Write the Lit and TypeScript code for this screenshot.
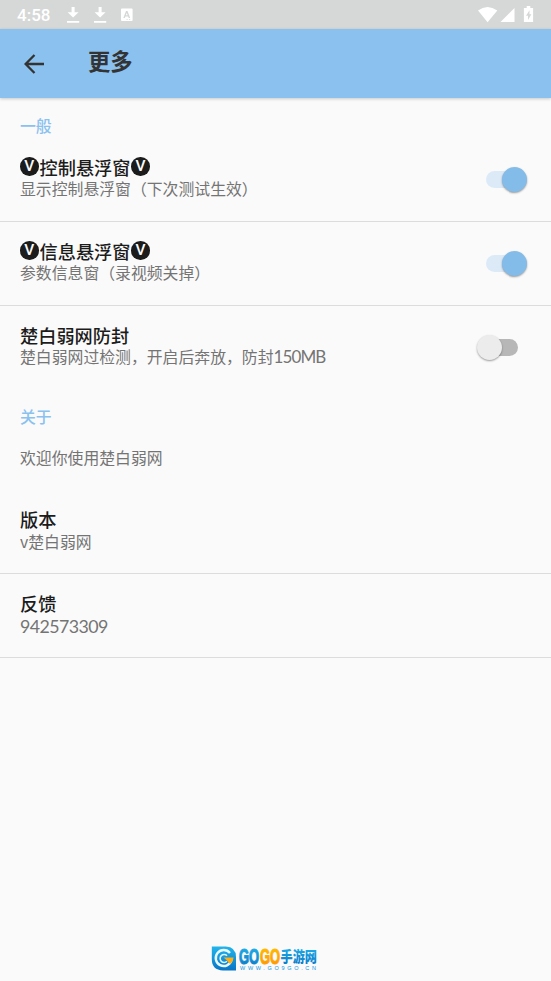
import { LitElement, html, css, svg } from "lit";
import { customElement, property } from "lit/decorators.js";

@customElement("status-bar")
class StatusBar extends LitElement {
  static styles = css`
    :host { display: flex; align-items: center; height: 29px; background: #d6d8d7; color: #fff; }
    .time { font: 500 17px/29px Roboto, sans-serif; margin-left: 17px; width: 50px; padding-top: 1px; height: 28px; }
    .icons { display: block; width: 484px; height: 29px; flex: none; }
  `;
  render() {
    const download = (x: number) => svg`<path transform="translate(${x} 0)" d="M4.6 7h3v5.200h4L6.100 17.500.6 12.200h4zM0 21h12.200v1.700H0z"/>`;
    return html`<span class="time">4:58</span>
      <svg class="icons" viewBox="67 0 484 29" fill="#fff">
        ${download(67)}${download(94)}
        <path fill-rule="evenodd" d="M122 8.400h9.600a1 1 0 0 1 1 1v10.700a1 1 0 0 1-1 1H122a1 1 0 0 1-1-1V9.400a1 1 0 0 1 1-1zM126 11l-2.700 7h1.500l.6-1.600h2.700l.6 1.600h1.500L127.500 11zM126.750 12.900l.9 2.400h-1.800zM126.500 19.200h1.200v.8h-1.200zM129 19.200h1.200v.8H129z"/>
        <path d="M478 10.500Q487.500 3.500 497.300 10.500L487.600 22.200z"/>
        <path d="M514.500 8v14H500.500z"/>
        <path fill-rule="evenodd" d="M526.700 6h3.600v2h2.800v14.100h-9.200V8h2.800zM529.500 10.200l-3.500 5.500h2v4.200l3.400-5.700h-1.900z"/>
      </svg>`;
  }
}

@customElement("app-header")
class AppHeader extends LitElement {
  static styles = css`
    :host { display: flex; height: 69px; background: #8ac1ef; box-shadow: 0 1px 3px rgba(0,0,0,.2); position: relative; color: #333; }
    .back { width: 20px; height: 20px; margin: 24.500px 0 0 24px; }
    .title { margin: 15px 0 0 44px; font: 700 22.300px/32px "Noto Sans CJK SC", sans-serif; }
  `;
  render() {
    return html`<svg class="back" viewBox="0 0 20 20" fill="none" stroke="#333" stroke-width="2.300"><path d="M20 10H2M10.500 1L1.600 10l8.900 9"/></svg>
      <span class="title">更多</span>`;
  }
}

@customElement("toggle-switch")
class ToggleSwitch extends LitElement {
  @property({ type: Boolean, reflect: true }) on = false;
  static styles = css`
    :host { display: flex; align-items: center; width: 50px; height: 28px; }
    .track { display: flex; align-items: center; width: 32px; height: 17px; margin-left: 9px; border-radius: 9px; background: #b7b7b7; }
    .thumb { width: 25px; height: 25px; flex: none; margin-left: -9px; border-radius: 50%; background: #ececec; box-shadow: 0 1px 2px rgba(0,0,0,.38); }
    :host([on]) .track { background: #dceaf8; }
    :host([on]) .thumb { background: #84bce9; margin-left: 16px; }
  `;
  render() {
    return html`<div class="track"><div class="thumb"></div></div>`;
  }
}

@customElement("setting-row")
class SettingRow extends LitElement {
  @property() label = "";
  @property() summary = "";
  @property() latin = "";
  @property({ type: Boolean }) badges = false;
  @property() toggle = "";
  @property({ type: Boolean, reflect: true }) divided = false;
  static styles = css`
    :host { display: flex; box-sizing: border-box; height: 83.800px; padding: 18px 24px 0 20px; justify-content: space-between; font-family: "Noto Sans CJK SC", sans-serif; }
    :host([divided]) { border-bottom: 1.500px solid #dcdcdc; }
    .label { display: flex; align-items: center; height: 22px; font-size: 18.200px; line-height: 22px; font-weight: 500; color: #1c1c1c; white-space: nowrap; }
    .badge { width: 18.500px; height: 18.500px; border-radius: 50%; background: #1c1c1c; color: #fafafa; font: 500 15.500px/18.500px Roboto, sans-serif; text-align: center; margin-top: -1px; margin-right: 1px; }
    .badge:last-child { margin: -1px 0 0 .8px; }
    .summary { height: 22px; margin-top: .4px; font-size: 15.850px; line-height: 22px; color: #747474; white-space: nowrap; }
    .digits { font-family: Lato, sans-serif; font-size: 17.800px; letter-spacing: -.55px; }
    .mixed { font-family: Lato, sans-serif; font-size: 17px; letter-spacing: -.9px; }
    .switch { margin-top: 9.500px; }
  `;
  render() {
    const badge = this.badges ? html`<span class="badge">V</span>` : null;
    return html`<div>
        <div class="label">${badge}<span>${this.label}</span>${badge}</div>
        <div class="summary">${this.summary}${this.latin ? html`<span class=${this.summary ? "mixed" : "digits"}>${this.latin}</span>` : null}</div>
      </div>
      ${this.toggle ? html`<toggle-switch class="switch" ?on=${this.toggle === "on"}></toggle-switch>` : null}`;
  }
}

@customElement("site-logo")
class SiteLogo extends LitElement {
  static styles = css`
    :host { display: block; width: 107px; height: 28px; }
    .art { display: block; overflow: visible; }
    .word { font: 700 22px "Liberation Sans", sans-serif; }
    .han { font: 900 15px "Noto Sans CJK SC", sans-serif; }
    .url { font: 400 5.500px "Liberation Sans", sans-serif; }
  `;
  render() {
    return html`<svg class="art" width="107" height="28" viewBox="0 0 107 28">
      <defs>
        <linearGradient id="blue" x2="0" y2="1"><stop stop-color="#22b5ec"/><stop offset="1" stop-color="#0875c5"/></linearGradient>
        <linearGradient id="gold" x2="0" y2="1"><stop stop-color="#ffc100"/><stop offset="1" stop-color="#ff9100"/></linearGradient>
      </defs>
      <path fill="url(#blue)" d="M.8 1.500h14Q25 2 25 12V25.500H12Q.8 25 .8 14z"/>
      <path d="M19 8A8 8 0 1 0 20.500 15" fill="none" stroke="#e9f8ff" stroke-width="2.400"/>
      <path d="M16 10.700a4 4 0 1 0 0 5.600" fill="none" stroke="#d9f3ff" stroke-width="1.600"/>
      <path d="M12.500 12.500H22.500q-.2 4-3.500 6.500L16 15.500z" fill="#ffae16"/>
      <g class="word">
        <text transform="translate(28 18.800) scale(.61 1)" textLength="33" lengthAdjust="spacingAndGlyphs" fill="url(#blue)" stroke="url(#blue)" stroke-width="1.100">GO</text>
        <text transform="translate(49 18.800) scale(.61 1)" textLength="33" lengthAdjust="spacingAndGlyphs" fill="url(#gold)" stroke="url(#gold)" stroke-width="1.100">GO</text>
      </g>
      <text class="han" x="69.500" y="17.300" textLength="36.500" lengthAdjust="spacingAndGlyphs" fill="url(#blue)">手游网</text>
      <text class="url" x="29" y="24.700" textLength="76" fill="#1594dc">WWW.GO9GO.CN</text>
    </svg>`;
  }
}

@customElement("app-root")
class AppRoot extends LitElement {
  static styles = css`
    :host { display: flex; flex-direction: column; height: 981px; background: #fafafa; overflow: hidden; font-family: "Noto Sans CJK SC", sans-serif; }
    .content { flex: 1; }
    .category { height: 40px; padding: 17px 20px 0; box-sizing: border-box; font-size: 15.850px; line-height: 22px; font-weight: 500; color: #8ac1ef; }
    .note { height: 61px; padding: 18px 20px 0; box-sizing: border-box; font-size: 15.850px; line-height: 22px; color: #747474; }
    .footer { display: flex; justify-content: center; padding: 0 23px 8px 0; }
  `;
  render() {
    return html`<status-bar></status-bar>
      <app-header></app-header>
      <main class="content">
        <div class="category">一般</div>
        <setting-row divided badges label="控制悬浮窗" summary="显示控制悬浮窗（下次测试生效）" toggle="on"></setting-row>
        <setting-row divided badges label="信息悬浮窗" summary="参数信息窗（录视频关掉）" toggle="on"></setting-row>
        <setting-row label="楚白弱网防封" summary="楚白弱网过检测，开启后奔放，防封" latin="150MB" toggle="off"></setting-row>
        <div class="category">关于</div>
        <div class="note">欢迎你使用楚白弱网</div>
        <setting-row divided label="版本" summary="v楚白弱网"></setting-row>
        <setting-row divided label="反馈" latin="942573309"></setting-row>
      </main>
      <footer class="footer"><site-logo></site-logo></footer>`;
  }
}
